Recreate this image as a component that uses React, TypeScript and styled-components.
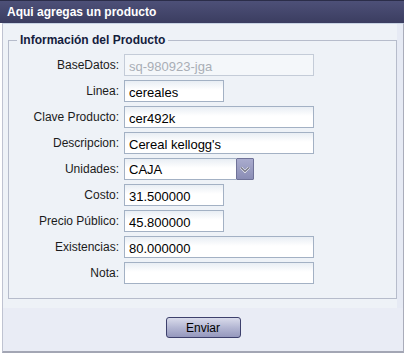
import React from 'react';
import styled, { createGlobalStyle } from 'styled-components';

const GlobalStyle = createGlobalStyle`
  body {
    margin: 0;
    background: #ffffff;
    font-family: 'Liberation Sans', 'DejaVu Sans', Arial, sans-serif;
  }
`;

type FieldProps = {
  wide?: boolean;
};

const Window = styled.div`
  width: 405px;
  height: 355px;
`;

const Header = styled.div`
  height: 23px;
  display: flex;
  align-items: center;
  padding-left: 7px;
  border-top: 1px solid #2b2d49;
  background: linear-gradient(#4d5078, #3b3d60);
  color: #ffffff;
  font-size: 12px;
  font-weight: bold;
  box-sizing: border-box;
  width: 404px;
`;

const Body = styled.div`
  margin-left: 2px;
  width: 400px;
  height: 327px;
  border-left: 1px solid #bfc3d1;
  border-right: 1px solid #a9acba;
  border-bottom: 2px solid #a3a6b4;
  border-top: 1px solid #c8d3e4;
  background: #e9ecf5;
  display: flex;
  flex-direction: column;
`;

const FormArea = styled.div`
  background: #eef2f7;
  border-right: 6px solid #e6eaf4;
  padding: 9px 0 9px 5px;
`;

const Fieldset = styled.fieldset`
  margin: 0;
  padding: 7px 0 14px 0;
  border: 1px solid #b6bccb;
  border-radius: 0;
`;

const Legend = styled.legend`
  margin-left: 8px;
  padding: 0 3px;
  color: #14203d;
  font-size: 12px;
  font-weight: bold;
`;

const Rows = styled.div`
  display: flex;
  flex-direction: column;
  gap: 4px;
`;

const Row = styled.div`
  display: grid;
  grid-template-columns: 110px 1fr;
  column-gap: 5px;
  align-items: center;
`;

const Label = styled.label`
  text-align: right;
  font-size: 12px;
  color: #1b1b1b;
`;

const Input = styled.input<FieldProps>`
  box-sizing: border-box;
  width: ${(props) => (props.wide ? '190px' : '100px')};
  height: 22px;
  margin: 0;
  padding: 2px 4px 0;
  border: 1px solid #a3b1c4;
  border-radius: 0;
  background: linear-gradient(#e9eef4, #ffffff 45%);
  font-family: 'Liberation Sans', 'DejaVu Sans', Arial, sans-serif;
  font-size: 13px;
  color: #000000;
  outline: none;

  &:disabled {
    border-color: #c4ccd8;
    background: #f4f7fa;
    color: #a9aeb6;
  }
`;

const Combo = styled.div`
  display: flex;
  width: 130px;
  height: 22px;
`;

const ComboText = styled.div`
  box-sizing: border-box;
  flex: 1;
  height: 22px;
  padding: 3px 4px 0;
  border: 1px solid #a3b1c4;
  border-right: none;
  background: linear-gradient(#e9eef4, #ffffff 45%);
  font-size: 13px;
  color: #000000;
`;

const ComboButton = styled.div`
  box-sizing: border-box;
  width: 18px;
  height: 22px;
  border: 1px solid #6f7298;
  border-radius: 1px;
  background: linear-gradient(#aaacce, #8a8db5);
  display: flex;
  align-items: center;
  justify-content: center;
`;

const Footer = styled.div`
  flex: 1;
  display: flex;
  justify-content: center;
  align-items: flex-start;
  padding-top: 9px;
`;

const SubmitButton = styled.button`
  box-sizing: border-box;
  width: 75px;
  height: 21px;
  border: 1px solid #3d406c;
  border-radius: 3px;
  background: linear-gradient(#d9dbeb, #b4b7d3 50%, #9598bd);
  font-family: 'Liberation Sans', 'DejaVu Sans', Arial, sans-serif;
  font-size: 12px;
  color: #000000;
  padding: 0;
`;

const fields = [
  { label: 'BaseDatos:', value: 'sq-980923-jga', wide: true, disabled: true },
  { label: 'Linea:', value: 'cereales' },
  { label: 'Clave Producto:', value: 'cer492k', wide: true },
  { label: 'Descripcion:', value: "Cereal kellogg's", wide: true },
  { label: 'Unidades:', value: 'CAJA', combo: true },
  { label: 'Costo:', value: '31.500000' },
  { label: 'Precio Público:', value: '45.800000' },
  { label: 'Existencias:', value: '80.000000', wide: true },
  { label: 'Nota:', value: '', wide: true },
];

const Chevron = () => (
  <svg width="10" height="7" viewBox="0 0 10 7">
    <path d="M1 1.5 L5 5.5 L9 1.5" fill="none" stroke="#ffffff" strokeWidth="2.4" />
    <path d="M1 1.5 L5 5.5 L9 1.5" fill="none" stroke="#6b6d7d" strokeWidth="1.2" />
  </svg>
);

const App = () => {
  return (
    <Window>
      <GlobalStyle />
      <Header>Aqui agregas un producto</Header>
      <Body>
        <FormArea>
          <Fieldset>
            <Legend>Información del Producto</Legend>
            <Rows>
              {fields.map((f) => (
                <Row key={f.label}>
                  <Label>{f.label}</Label>
                  {f.combo ? (
                    <Combo>
                      <ComboText>{f.value}</ComboText>
                      <ComboButton>
                        <Chevron />
                      </ComboButton>
                    </Combo>
                  ) : (
                    <Input
                      wide={f.wide}
                      defaultValue={f.value}
                      disabled={f.disabled}
                    />
                  )}
                </Row>
              ))}
            </Rows>
          </Fieldset>
        </FormArea>
        <Footer>
          <SubmitButton>Enviar</SubmitButton>
        </Footer>
      </Body>
    </Window>
  );
};

export default App;
